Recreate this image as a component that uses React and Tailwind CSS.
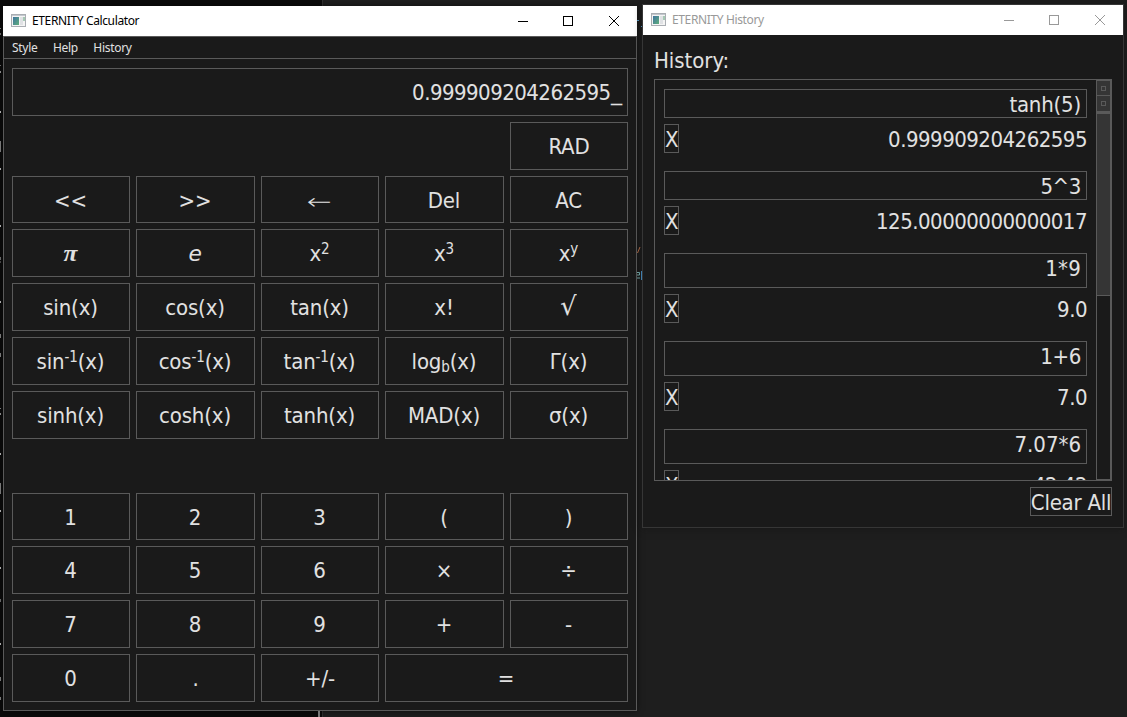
const B = "border-[#5a5a5a]";

const topRows = [
  [
    "<<",
    ">>",
    <span className="relative top-px inline-block scale-x-[1.35] font-['DejaVu_Sans',sans-serif] font-light tracking-normal">←</span>,
    "Del",
    "AC",
  ],
  [
    <b className="relative top-px inline-block scale-x-110 font-['Liberation_Serif',serif] text-[23px] italic">π</b>,
    <i className="inline-block scale-x-110">e</i>,
    <>x<Sup>2</Sup></>,
    <>x<Sup>3</Sup></>,
    <>x<Sup>y</Sup></>,
  ],
  ["sin(x)", "cos(x)", "tan(x)", "x!", <span className="inline-block scale-x-110 text-[26px] leading-none">√</span>],
  [
    <>sin<Sup>-1</Sup>(x)</>,
    <>cos<Sup>-1</Sup>(x)</>,
    <>tan<Sup>-1</Sup>(x)</>,
    <>log<sub className="relative top-[3px] bottom-0 align-baseline text-[15px] leading-none">b</sub>(x)</>,
    "Γ(x)",
  ],
  ["sinh(x)", "cosh(x)", "tanh(x)", "MAD(x)", "σ(x)"],
];

const bottomRows = [
  ["1", "2", "3", "(", ")"],
  ["4", "5", "6", "×", "÷"],
  ["7", "8", "9", "+", "-"],
];

const history = [
  { expr: "tanh(5)", value: "0.999909204262595", box: "h-[29px] pt-px", spacing: "tracking-[-0.2px]" },
  { expr: "5^3", value: "125.00000000000017", box: "h-[29px] pt-px", spacing: "tracking-[-0.4px]" },
  { expr: "1*9", value: "9.0", box: "h-[35px] pb-[4px]", spacing: "tracking-[0.2px]" },
  { expr: "1+6", value: "7.0", box: "h-[35px] pb-[4px]", spacing: "tracking-[-0.3px]" },
  { expr: "7.07*6", value: "42.42", box: "h-[35px] pb-[4px]", spacing: "tracking-[0px]" },
];

// Scraps of the editor text that show past the left edge of the calculator: [y, height, grey]
const scraps = [
  [28, 1, "#777"], [33, 2, "#666"], [65, 1, "#666"], [71, 2, "#888"], [111, 2, "#aaa"],
  [141, 11, "#777"], [168, 2, "#aaa"], [225, 2, "#aaa"], [257, 3, "#666"], [261, 2, "#444"],
  [301, 2, "#aaa"], [334, 4, "#777"], [353, 4, "#777"], [408, 1, "#777"], [413, 2, "#888"],
  [453, 2, "#aaa"], [483, 11, "#777"], [510, 2, "#aaa"], [567, 2, "#aaa"], [599, 3, "#666"],
  [643, 2, "#aaa"], [677, 4, "#777"], [697, 3, "#777"],
];

function Sup({ children }) {
  return <sup className="relative top-[-7px] align-baseline text-[15px] leading-none">{children}</sup>;
}

function Key({ children, className = "" }) {
  return (
    <button className={`flex items-center justify-center border ${B} whitespace-pre ${className}`}>
      <span>{children}</span>
    </button>
  );
}

function AppIcon() {
  return (
    <svg width="16" height="14" viewBox="0 0 16 14" className="shrink-0">
      <defs>
        <linearGradient id="pane" x1="0" y1="0" x2="1" y2="1">
          <stop offset="0" stopColor="#3f74a0" />
          <stop offset="1" stopColor="#5fae7c" />
        </linearGradient>
      </defs>
      <rect x="0.5" y="0.5" width="14" height="12" fill="#f4f4f4" stroke="#a9adb2" />
      <rect x="1" y="1" width="13" height="1" fill="#c3c8ce" />
      <rect x="2" y="3" width="6" height="8" fill="url(#pane)" />
      <rect x="9" y="3" width="3" height="8" fill="#dfe1e4" />
      <rect x="12" y="3" width="2" height="4" fill="#a5c9b4" />
    </svg>
  );
}

function TitleBar({ title, color }) {
  return (
    <header className={`flex h-[30px] shrink-0 items-center bg-white pl-2 ${color}`}>
      <AppIcon />
      <span className="ml-[5px] flex-1 font-['Noto_Sans',sans-serif] text-[12px] tracking-[-0.37px]">{title}</span>
      <svg width="104" height="12" viewBox="0 0 104 12" fill="none" stroke="currentColor" className="mr-[15px]" shapeRendering="crispEdges">
        <path d="M0 6.5h10M45.5 1.5h9v9h-9z" />
        <path d="M91 1l10 10M101 1l-10 10" shapeRendering="auto" />
      </svg>
    </header>
  );
}

function Backdrop() {
  return (
    <svg width="1127" height="717" className="absolute inset-0" aria-hidden="true">
      <rect width="322" height="717" fill="#0b0b0b" />
      <rect x="322" width="1" height="717" fill="#303030" />
    </svg>
  );
}

function Scraps() {
  return (
    <svg width="1127" height="717" className="pointer-events-none absolute inset-0" aria-hidden="true">
      {scraps.map(([y, h, fill]) => <rect key={y} y={y} width="1" height={h} fill={fill} />)}
      <rect x="318" y="711" width="2" height="6" fill="#777" />
      <path d="M640 247l-2.5 6" stroke="#a0603f" fill="none" />
      <path d="M637 272.5h2.5v2.5h-2.5M637 278h3" stroke="#6a9a9a" fill="none" />
      <path d="M641.5 271v9" stroke="#3f7eae" />
      <path d="M637 20.5h2M641 26.5h1" stroke="#4a88b0" />
    </svg>
  );
}

function Calculator() {
  return (
    <section className="mt-[6px] ml-[3px] flex h-[705px] w-[634px] shrink-0 flex-col shadow-[0_0_6px_#0008]">
      <TitleBar title="ETERNITY Calculator" color="text-black" />
      <div className={`flex flex-1 flex-col border ${B} bg-[#1a1a1a]`}>
        <nav className={`flex h-[22px] shrink-0 items-center gap-[15.5px] border-b ${B} pl-2 font-['Noto_Sans',sans-serif] text-[12px] tracking-[-0.3px]`}>
          <span>Style</span>
          <span>Help</span>
          <span>History</span>
        </nav>
        <div className="grid grid-cols-[118px_119px_118px_119px_118px] grid-rows-[48px_48px_47px_48px_48px_48px_48px_42px_47px_48px_48px_48px] gap-[6px] pt-[9px] pl-2 text-[22px] tracking-[-0.15px]">
          <output className={`col-span-5 flex items-center justify-end border ${B} pr-[6px] tracking-[-0.54px]`}>
            0.999909204262595<span className="inline-block origin-left scale-x-[1.12] pr-px">_</span>
          </output>
          <Key className="col-start-5">RAD</Key>
          {topRows.flat().map((label, i) => <Key key={i} className={i < 5 ? "pt-px pr-px" : "pr-px"}>{label}</Key>)}
          <div className="col-span-5" />
          {bottomRows.flat().map((label, i) => <Key key={label} className={i < 5 ? "pt-px pr-px" : "pr-px"}>{label}</Key>)}
          <Key className="pr-px">0</Key>
          <Key>.</Key>
          <Key>+/-</Key>
          <Key className="col-span-2 pr-px">=</Key>
        </div>
      </div>
    </section>
  );
}

function ScrollBar() {
  return (
    <div className={`flex w-[15px] shrink-0 flex-col border-r border-b border-l ${B}`}>
      <div className={`flex h-[16px] items-center justify-center border-y ${B} bg-[#353535]`}>
        <span className={`size-[5px] border ${B}`} />
      </div>
      <div className={`flex h-[18px] items-center justify-center border-b-[3px] ${B} bg-[#353535]`}>
        <span className={`size-[5px] border ${B}`} />
      </div>
      <div className={`h-[182px] border-b ${B} bg-[#353535]`} />
    </div>
  );
}

function History() {
  return (
    <section className="mt-[4px] ml-[5px] flex h-[524px] w-[482px] shrink-0 flex-col border border-[#363636] bg-[#1a1a1a] text-[22px] tracking-[-0.4px] shadow-[0_0_8px_#1118]">
      <TitleBar title="ETERNITY History" color="text-[#999]" />
      <div className="flex flex-1 flex-col px-[11px]">
        <h1 className="mt-[11px] h-[29px] leading-[29px] tracking-[-0.05px]">History:</h1>
        <div className={`mt-[4px] flex h-[402px] shrink-0 overflow-hidden border ${B}`}>
          <ul className="flex-1 px-[9px] pt-[9px]">
            {history.map((item) => (
              <li key={item.expr} className="mb-[18px]">
                <div className={`flex items-center justify-end border ${B} pr-[5px] ${item.box} ${item.spacing}`}>{item.expr}</div>
                <div className="mt-[6px] flex h-[29px] items-center justify-between">
                  <button className={`flex h-[29px] w-[15px] items-center justify-center border ${B} pt-px`}>X</button>
                  <span className="pt-[2px] tracking-[-0.52px]">{item.value}</span>
                </div>
              </li>
            ))}
          </ul>
          <ScrollBar />
        </div>
        <button className={`mt-[6px] flex h-[29px] w-[82px] items-center justify-center self-end border ${B} pt-px whitespace-nowrap tracking-[-0.25px]`}>Clear All</button>
      </div>
    </section>
  );
}

export default function App() {
  return (
    <main className="relative h-[717px] w-[1127px] overflow-hidden bg-[#1e1e1e] font-['DejaVu_Sans_Condensed','DejaVu_Sans',sans-serif] text-[#e1e1e1] [font-stretch:condensed]">
      <Backdrop />
      <div className="relative flex items-start">
        <Calculator />
        <History />
      </div>
      <Scraps />
    </main>
  );
}
